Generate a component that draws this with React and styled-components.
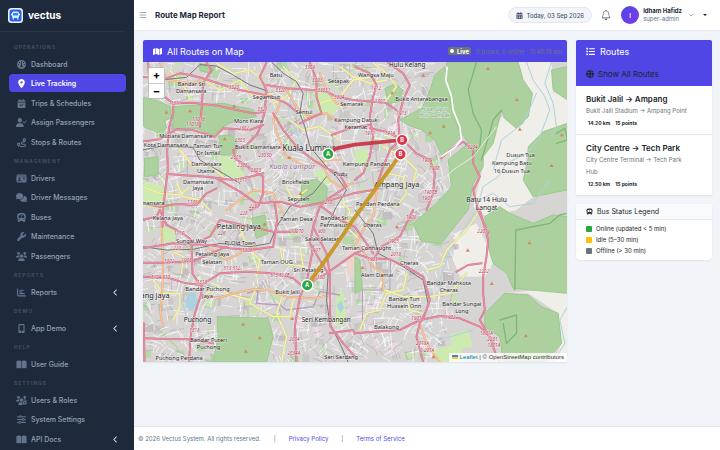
import React from "react";
import styled, { createGlobalStyle, css } from "styled-components";
import {
  FaBookOpen,
  FaBus,
  FaCalendarCheck,
  FaCalendarDays,
  FaChartBar,
  FaChevronLeft,
  FaCircle,
  FaComments,
  FaGauge,
  FaGlobe,
  FaIdCard,
  FaList,
  FaLocationDot,
  FaMap,
  FaMobileScreenButton,
  FaRoute,
  FaSliders,
  FaUserCheck,
  FaUsers,
  FaUsersGear,
  FaWrench,
} from "react-icons/fa6";
import { BsBell, BsChevronDown, BsList } from "react-icons/bs";

const GlobalStyle = createGlobalStyle`
  *, *::before, *::after {
    box-sizing: border-box;
  }
  body {
    margin: 0;
    background: #f1f4f9;
    color: #212529;
    font-family: Inter, "Liberation Sans", sans-serif;
    font-size: 7px;
    line-height: 11px;
  }
  button {
    font: inherit;
    color: inherit;
    border: 0;
    padding: 0;
    background: none;
    cursor: pointer;
  }
  a {
    color: inherit;
    text-decoration: none;
  }
  ul, h1, h2, h3, p {
    margin: 0;
    padding: 0;
    font: inherit;
    list-style: none;
  }
`;

const Shell = styled.div`
  display: grid;
  grid-template-columns: 134px 1fr;
  height: 100vh;
`;

// ---------- sidebar ----------
const Sidebar = styled.aside`
  background: #1e293b;
  overflow: hidden;
`;

const Brand = styled.a`
  display: flex;
  align-items: center;
  gap: 5px;
  height: 32px;
  margin-right: 9px;
  padding-left: 8px;
  border-bottom: 1px solid #2a3547;
  color: #fff;
  font-size: 10px;
  font-weight: 700;

  svg {
    width: 15px;
    height: 15px;
  }
`;

const Nav = styled.nav`
  padding: 8px 8px 0 9px;
`;

const NavHeading = styled.h2`
  height: 15px;
  padding: 2px 0 0 5px;
  color: #475569;
  font-size: 5px;
  font-weight: 600;
  letter-spacing: 1px;
  text-transform: uppercase;
`;

const NavList = styled.ul`
  padding-bottom: 2px;
`;

const NavItem = styled.li`
  margin-bottom: 1px;

  &:nth-child(even) {
    margin-bottom: 2px;
  }
`;

const NavLink = styled.a`
  display: flex;
  align-items: center;
  gap: 4px;
  height: 18px;
  padding: 0 7px;
  border-radius: 4px;
  color: #94a3b8;
  font-weight: 500;

  > svg {
    width: 11px;
    height: 9px;
    color: #64748b;
  }
  > span {
    flex: 1;
  }
  > svg:last-child:not(:first-child) {
    width: 7px;
    height: 7px;
    color: #e2e8f0;
  }

  ${(props) =>
    props.$active &&
    css`
      background: #4f46e5;
      color: #fff;
      font-weight: 600;

      > svg {
        color: #fff;
      }
    `}
`;

// ---------- top bar ----------
const Main = styled.div`
  display: flex;
  flex-direction: column;
  min-width: 0;
`;

const TopBar = styled.header`
  display: flex;
  align-items: center;
  height: 31px;
  padding: 0 13px 0 4px;
  background: #fff;
  border-bottom: 1px solid #e2e8f0;
`;

const IconButton = styled.button`
  display: flex;
  color: #475569;

  svg {
    width: 10px;
    height: 10px;
  }
`;

const PageTitle = styled.h1`
  flex: 1;
  margin-left: 7px;
  color: #1e293b;
  font-size: 8px;
  font-weight: 700;
`;

const DatePill = styled.div`
  display: flex;
  align-items: center;
  gap: 4px;
  height: 16px;
  margin-right: 9px;
  padding: 0 7px;
  border: 1px solid #e2e8f0;
  border-radius: 8px;
  background: #f1f5f9;
  color: #475569;
  font-size: 6px;
  font-weight: 500;

  svg {
    width: 7px;
    height: 7px;
  }
`;

const UserMenu = styled.button`
  display: flex;
  align-items: center;
  gap: 4px;
  margin-left: 10px;
  color: #64748b;
  text-align: left;

  svg {
    width: 6px;
    height: 6px;
    margin: 0 5px 0 2px;
  }
`;

const Avatar = styled.span`
  display: grid;
  place-items: center;
  width: 18px;
  height: 18px;
  border-radius: 50%;
  background: linear-gradient(135deg, #4f46e5, #7c3aed);
  color: #fff;
  font-size: 6px;
  font-weight: 600;
`;

const UserName = styled.span`
  display: flex;
  flex-direction: column;
  font-size: 6px;
  line-height: 8px;

  strong {
    color: #1e293b;
    font-weight: 700;
  }
`;

const Caret = styled.i`
  border: 2px solid transparent;
  border-top-color: #212529;
  border-bottom: 0;
`;

// ---------- content ----------
const Content = styled.main`
  display: grid;
  grid-template-columns: 1fr 136px;
  align-items: start;
  gap: 9px;
  flex: 1;
  padding: 9px 8px 0 9px;
`;

const Card = styled.section`
  overflow: hidden;
  border-radius: ${(props) => (props.$round ? "0 0 4px 4px" : "2px 2px 0 0")};
  background: #fff;
  box-shadow: 0 1px 2px rgba(15, 23, 42, 0.08);
`;

const CardHeader = styled.header`
  display: flex;
  align-items: center;
  gap: 5px;
  height: 22px;
  padding: 0 5px 0 10px;
  background: #4f46e5;
  color: #fff;
  font-size: 9px;

  svg {
    width: 9px;
    height: 9px;
  }
  h2 {
    flex: 1;
  }
`;

const LiveBadge = styled.span`
  display: flex;
  align-items: center;
  gap: 3px;
  height: 8px;
  padding: 0 2px;
  border-radius: 2px;
  background: #6c757d;
  font-size: 6px;
  font-weight: 700;

  svg {
    width: 4px;
    height: 4px;
  }
`;

const LiveStatus = styled.span`
  color: #6c757d;
  font-size: 6px;
`;

const MapBox = styled.div`
  position: relative;
  height: 300px;
  overflow: hidden;
  background: #e0dfdf;

  > svg {
    display: block;
    width: 100%;
    height: 100%;
  }
`;

const ZoomControl = styled.div`
  position: absolute;
  top: 5px;
  left: 5px;
  display: grid;
  border: 1px solid rgba(0, 0, 0, 0.25);
  border-radius: 2px;
  background: #fff;

  button {
    width: 15px;
    height: 15px;
    color: #000;
    font-size: 11px;
    font-weight: 700;
  }
  button + button {
    border-top: 1px solid #ccc;
  }
`;

const Attribution = styled.div`
  position: absolute;
  right: 0;
  bottom: 0;
  height: 9px;
  padding: 0 3px;
  background: rgba(255, 255, 255, 0.8);
  color: #333;
  font-family: "Liberation Sans", Arial, sans-serif;
  font-size: 6px;
  line-height: 9px;

  a {
    color: #0078a8;
  }
  a + a {
    color: #333;
  }
  svg {
    width: 6px;
    height: 4px;
    margin-right: 2px;
  }
`;

const SideColumn = styled.div`
  display: grid;
  gap: 9px;
`;

const ShowAll = styled.button`
  display: flex;
  align-items: center;
  gap: 4px;
  width: 100%;
  height: 24px;
  padding: 0 10px;
  background: #4f46e5;
  color: #212529;
  font-size: 8px;

  svg {
    width: 8px;
    height: 8px;
  }
`;

const RouteItem = styled.a`
  display: block;
  padding: 7px 10px 5px;
  color: #6c757d;
  font-size: 6px;
  line-height: 12px;

  & + & {
    border-top: 1px solid #e5e8ec;
  }
  h3 {
    color: #212529;
    font-size: 8px;
    font-weight: 600;
    line-height: 12px;
  }
`;

const RouteStops = styled.p`
  padding-right: 12px;
`;

const RouteFacts = styled.p`
  display: flex;
  gap: 5px;
  padding-left: 2px;
  color: #212529;
  font-size: 5px;
  font-weight: 700;
`;

const LegendTitle = styled.h2`
  display: flex;
  align-items: center;
  gap: 4px;
  height: 16px;
  padding: 0 10px;
  border-bottom: 1px solid #e5e8ec;
  background: #f8fafc;

  svg {
    width: 7px;
    height: 7px;
  }
`;

const LegendList = styled.ul`
  padding: 3px 10px 4px;
  font-size: 6px;

  li {
    display: flex;
    align-items: center;
    gap: 4px;
  }
`;

const Swatch = styled.i`
  width: 6px;
  height: 6px;
  border-radius: 1px;
  background: ${(props) => props.$color};
`;

const Footer = styled.footer`
  display: flex;
  align-items: center;
  gap: 13px;
  height: 24px;
  padding: 0 4px;
  border-top: 1px solid #e2e8f0;
  background: #fff;
  color: #64748b;
  font-size: 6px;

  a {
    color: #4f46e5;
  }
`;

// ---------- data ----------
const menu = [
  {
    title: "Operations",
    items: [
      ["Dashboard", FaGauge],
      ["Live Tracking", FaLocationDot, "active"],
      ["Trips & Schedules", FaCalendarCheck],
      ["Assign Passengers", FaUserCheck],
      ["Stops & Routes", FaRoute],
    ],
  },
  {
    title: "Management",
    items: [
      ["Drivers", FaIdCard],
      ["Driver Messages", FaComments],
      ["Buses", FaBus],
      ["Maintenance", FaWrench],
      ["Passengers", FaUsers],
    ],
  },
  { title: "Reports", items: [["Reports", FaChartBar, "tree"]] },
  { title: "Demo", items: [["App Demo", FaMobileScreenButton, "tree"]] },
  { title: "Help", items: [["User Guide", FaBookOpen]] },
  {
    title: "Settings",
    items: [
      ["Users & Roles", FaUsersGear],
      ["System Settings", FaSliders],
      ["API Docs", FaBookOpen, "tree"],
    ],
  },
];

const routes = [
  {
    name: "Bukit Jalil → Ampang",
    stops: "Bukit Jalil Stadium → Ampang Point",
    km: "14.20 km",
    points: "15 points",
  },
  {
    name: "City Centre → Tech Park",
    stops: "City Centre Terminal → Tech Park Hub",
    km: "12.50 km",
    points: "15 points",
  },
];

const legend = [
  ["#28a745", "Online (updated < 5 min)"],
  ["#ffc107", "Idle (5–30 min)"],
  ["#6c757d", "Offline (> 30 min)"],
];

// ---------- map ----------
const forests = [
  "920,6 1135,6 1150,60 1178,100 1165,170 1130,205 1095,175 1085,150 1060,250 1030,290 1030,320 1000,370 985,450 960,480 905,550 845,545 820,490 890,430 935,380 925,300 985,250 955,200 935,130 918,60",
  "780,180 845,145 868,100 885,45 915,20 925,80 935,150 965,230 945,250 905,285 885,240 845,210 805,195",
  "1165,260 1210,215 1283,190 1283,390 1180,410 1150,360 1165,300",
  "1235,30 1283,20 1283,120 1240,90",
  "1035,470 1080,440 1110,460 1180,490 1240,465 1283,470 1283,700 1120,685 1100,640 1060,610 1045,560",
  "1035,760 1095,700 1165,705 1205,740 1255,760 1265,850 1215,906 1090,906 1080,830 1035,800",
  "232,770 385,775 400,830 380,906 220,906 235,830",
  "100,140 250,130 340,150 350,170 290,180 250,200 220,225 170,205 100,205",
  "237,228 270,225 292,240 288,285 240,285",
  "10,112 60,125 92,140 95,175 75,180 80,205 55,218 12,200",
  "14,295 55,290 55,345 14,350",
  "485,365 530,358 562,380 560,420 520,435 485,415",
  "735,85 765,72 790,90 780,125 745,130",
  "645,590 660,600 668,690 645,700",
  "335,475 375,465 385,520 350,535",
  "180,10 225,20 215,40 180,32",
];

const lightParks = [
  "230,292 270,288 315,345 300,362 250,345",
  "10,360 70,380 75,450 10,440",
  "520,80 560,90 600,140 570,170 530,150",
  "645,270 680,265 690,300 645,320",
  "590,700 610,690 620,790 585,800",
  "930,825 985,810 1000,860 940,870",
  "520,340 540,325 580,360 560,375",
  "60,500 110,505 105,545 65,545",
  "880,870 960,850 980,906 890,906",
];

const scrub = [
  "1135,6 1235,6 1240,95 1283,120 1283,190 1210,215 1165,260 1150,360 1180,410 1130,450 1040,470 1000,440 1030,320 1030,290 1085,170 1130,205 1165,170 1178,100 1150,60",
  "945,520 1010,490 1045,560 1060,610 1035,650 960,650 940,600",
  "1090,700 1200,690 1283,700 1283,906 1240,906 1265,850 1255,760 1165,700",
];

const trunkRoads = [
  "8,50 70,58 120,40 150,45 200,58 250,75 300,90 350,100 395,110 440,130 470,155",
  "200,8 215,30 190,70 186,140 180,200",
  "25,8 28,60 60,100 100,130 100,160 88,200 82,270 84,330 75,400 70,450 68,500",
  "8,245 60,238 80,225 110,208 160,210 190,220 225,230 250,205 330,210 370,195",
  "95,130 160,128 240,138 290,150 340,160 375,155",
  "380,8 360,50 380,90 375,150 365,195 350,225 320,255 280,270 285,295 330,325 370,350 370,400 355,440 330,450",
  "370,340 330,350 280,360 200,350 120,345 85,342",
  "380,75 440,85 520,90 560,95 590,110 640,120 700,125 740,130 770,150",
  "510,8 530,60 530,110 545,160 500,180 480,190",
  "645,20 690,40 710,75 700,110 690,170 700,230 690,290 670,340 645,360",
  "745,8 790,40 810,75 790,120 775,180 780,240 750,270 730,320 710,380",
  "690,205 740,215 790,240 830,280 870,300 885,340 880,400 860,450",
  "400,160 430,210 470,260 520,300 570,330 620,350",
  "600,345 620,380 590,400 560,420 540,440 520,500 510,550 540,600 565,640",
  "8,430 60,440 110,432 170,435 200,400 230,385",
  "230,355 300,395 350,430 420,425 480,440 540,430 640,400 700,390",
  "405,430 412,480 400,560 330,570 270,565 210,555 100,550 8,565",
  "470,515 400,515 330,500 240,480 210,530 155,555 158,640 180,675",
  "60,450 80,495 130,520 155,540",
  "8,608 80,608 160,603 260,560",
  "8,650 90,655 140,670 185,675 240,640 320,635 400,640 460,655 490,680 560,640 645,580 700,560",
  "185,675 185,700 165,760 152,830 148,906",
  "8,835 80,837 150,838 220,850",
  "12,790 14,906",
  "470,906 465,800 480,710 500,670 520,560",
  "520,500 560,580 570,640 570,740 572,800 610,850 645,890",
  "545,440 600,480 645,500 700,580",
  "645,580 690,595 750,598 800,620 850,650 870,720 860,750 840,790 830,830 850,906",
  "700,600 725,560 780,530 820,450",
  "645,820 700,815 780,810 840,780 900,768 960,775 1020,800 1050,830 1070,890 1080,906",
  "1020,450 1045,540 1040,590 1030,650 1030,700 1035,750 1020,780 1060,850",
  "905,295 930,270 970,245 1000,270 1000,310 1020,350 1000,390 1015,450 1045,520",
  "950,635 985,615 1025,610",
  "8,480 50,470 60,450",
  "575,225 630,205 690,195",
  "570,820 640,810 645,820",
];

const orangeRoads = [
  "60,6 80,60 160,70 190,55",
  "65,480 68,560 70,650 62,760 70,800",
  "420,130 400,180 415,230 440,290 500,320 560,300 600,300",
  "440,90 470,140 500,170 560,160 600,190",
  "200,560 260,600 320,570 350,560",
  "645,560 680,490 700,470 710,400 720,350 740,300",
  "660,560 700,620 730,640 730,690",
  "185,710 240,712 300,695 345,688 380,690 440,710 520,715 570,705",
  "840,790 860,850 880,880 900,906",
  "550,320 570,360 600,380 640,370",
  "540,40 560,90 590,130 620,140",
  "260,450 300,420 340,390 400,400 430,460",
];

const yellowRoads = [
  "190,60 240,90 300,60 340,110 400,100",
  "90,30 140,90 150,120",
  "230,10 280,40 330,30 370,60",
  "120,270 160,320 200,310 250,350",
  "8,380 60,400 120,405 150,380",
  "110,370 130,410 180,420 210,450",
  "430,20 470,60 440,110 400,130",
  "450,180 490,210 540,200 600,240",
  "540,130 600,110 640,60 700,50",
  "600,20 640,50 690,70 740,60",
  "700,8 740,40 770,80 740,120",
  "40,660 70,700 120,700 120,740 100,780",
  "300,500 320,560 360,600 350,650",
  "350,680 330,730 400,770 450,770 460,720",
  "420,560 430,610 490,620 480,560",
  "660,810 680,760 720,750 740,700 790,690 800,640",
  "735,690 790,710 870,710 930,700 980,640",
  "860,630 900,620 920,570 980,510 1020,450",
  "800,710 810,750 850,760",
  "430,700 410,760 440,830 425,906",
  "200,700 240,680 260,700 330,720",
  "730,260 790,290 830,330 820,370",
  "740,340 790,350 800,400 770,440 740,430",
  "500,390 460,420 440,380",
  "600,420 630,450 620,500 660,540",
  "90,570 130,590 125,640",
];

const railways = [
  "395,6 430,40 470,65 490,100 480,160 495,200 510,260 560,320 590,350 620,390 590,440 560,500",
  "60,60 140,52 180,14 230,18 280,45 330,75 380,92",
  "8,560 80,570 160,568 240,550 330,560 390,550 410,500 450,440 520,400 560,350",
  "565,640 560,720 570,790 600,850 625,906",
  "645,450 700,520 715,580 790,620 850,660 865,730 850,780",
  "8,270 60,260 160,262 180,300 250,340 300,370",
];

const rivers = [
  "1160,6 1180,60 1215,110 1230,150 1200,230 1160,280 1100,310 1075,350 1030,380 1010,450 930,570 900,660",
  "1235,6 1215,70 1240,130 1250,200 1235,230",
  "1283,740 1260,780 1275,850 1240,906",
  "1230,360 1180,430 1110,440 1060,400 1020,420",
  "880,760 850,800 900,840 1000,810",
  "1190,100 1150,190 1085,240 1060,330",
  "440,6 460,80 445,160 480,240 520,330",
  "120,700 140,770 180,790 220,740",
];

const boundaries = [
  "1010,6 985,90 1000,160 1025,210 1020,260 1002,285",
  "1125,690 1128,510 1230,490 1260,465 1283,460",
  "1085,150 1060,180 1040,250 1025,300",
  "1080,780 1130,765 1130,820 1100,850 1090,790",
  "1250,220 1275,205 1283,240 1250,250",
];

const places = [
  ["Batu", 408, 52],
  ["Setapak", 596, 70],
  ["Bandar Sri", 155, 77],
  ["Damansara", 154, 98],
  ["Segambut", 380, 117],
  ["Sentul", 493, 162],
  ["Mont Kiara", 326, 190],
  ["Semarak", 636, 139],
  ["Kampung Datuk", 648, 185],
  ["Keramat", 648, 206],
  ["Mutiara Damansara", 137, 233],
  ["Kota Damansara", 78, 262],
  ["Taman Tun", 205, 264],
  ["Dr Ismail", 206, 284],
  ["Bukit Damansara", 354, 268],
  ["Damansara", 200, 319],
  ["Utama", 198, 340],
  ["Damansara", 175, 371],
  ["Jaya", 174, 391],
  ["Brickfields", 468, 371],
  ["Pudu", 602, 349],
  ["Kampung Pandan", 680, 319],
  ["Seputeh", 476, 424],
  ["Damansara", 28, 435],
  ["Hulu Kelang", 802, 21, 19],
  ["Wangsa Maju", 708, 51],
  ["Bukit Antarabangsa", 845, 124],
  ["Dusun Tua", 1142, 291],
  ["Kampung Batu", 1116, 315],
  ["16 Dusun Tua", 1116, 339],
  ["Pandan Perdana", 714, 437],
  ["Batu 14 Hulu", 1040, 426, 20],
  ["Langat", 1040, 450, 20],
  ["Ampang Jaya", 771, 381, 22],
  ["Kuala Lumpur", 507, 273, 24],
  ["Petaling Jaya", 297, 506, 22],
  ["Subang Jaya", 26, 713, 22],
  ["Kelana Jaya", 84, 481],
  ["Sungai Way", 155, 549],
  ["PJ Old Town", 301, 555],
  ["Petaling Jaya", 217, 589],
  ["Selatan", 217, 611],
  ["Taman Desa", 470, 482],
  ["Bandar Sri", 584, 480],
  ["Permaisuri", 584, 501],
  ["Salak Selatan", 548, 543],
  ["Taman OUG", 411, 612],
  ["Sri Petaling", 506, 637],
  ["Taman Connaught", 680, 570],
  ["Bukit Jalil", 443, 702],
  ["Bandar Puchong", 203, 693],
  ["Jaya", 203, 714],
  ["Puchong", 173, 786, 20],
  ["Seri Kembangan", 559, 786, 19],
  ["Bandar Puteri", 206, 847],
  ["Puchong", 206, 868],
  ["Puchong Perdana", 118, 901],
  ["Seri Serdang", 604, 898],
  ["Cheras", 698, 500],
  ["Cheras", 808, 615],
  ["Alam Damai", 712, 651],
  ["Bandar Mahkota", 927, 675],
  ["Cheras", 927, 696],
  ["Bandar Tun", 793, 724],
  ["Hussein Onn", 793, 744],
  ["Bandar Sungai", 966, 738],
  ["Long", 966, 759],
  ["Balakong", 740, 807],
];

const roadNumbers = [
  ["3320", 282, 86],
  ["3320", 422, 95],
  ["3309", 510, 27],
  ["3303", 532, 66],
  ["33031", 552, 97],
  ["3304", 598, 118],
  ["1311", 108, 136],
  ["11016", 176, 182],
  ["11018", 158, 199],
  ["3321", 368, 153],
  ["2302", 312, 211],
  ["2303", 300, 246],
  ["2303D", 376, 290],
  ["2305", 288, 297],
  ["2306", 308, 320],
  ["2303", 348, 336],
  ["1311", 306, 367],
  ["1108", 158, 432],
  ["226", 340, 444],
  ["210", 566, 432],
  ["1912", 708, 90],
  ["1301", 720, 130],
  ["1913", 785, 165],
  ["1911", 690, 225],
  ["1914", 750, 224],
  ["1909", 862, 305],
  ["1908", 884, 330],
  ["1907B", 872, 402],
  ["1907", 862, 419],
  ["3204", 998, 268],
  ["228", 312, 465],
  ["226", 246, 526],
  ["1110", 118, 526],
  ["220", 112, 569],
  ["1006", 322, 576],
  ["1002", 88, 608],
  ["1003", 140, 605],
  ["510A 510", 62, 656],
  ["513 512", 276, 630],
  ["513 513B", 420, 650],
  ["1318", 186, 671],
  ["1318", 164, 816],
  ["10070", 472, 518],
  ["907", 530, 575],
  ["908", 546, 519],
  ["513D", 540, 658],
  ["2034", 464, 844],
  ["2034A", 462, 885],
  ["1908", 814, 478],
  ["1905", 762, 548],
  ["1903", 698, 602],
  ["2018", 768, 589],
  ["1901", 830, 780],
  ["1902", 932, 778],
  ["2201", 1028, 520],
  ["2202", 1032, 640],
  ["1801A", 1040, 826],
  ["2201", 1058, 844],
  ["1801A", 1062, 862],
  ["2018A", 848, 856],
  ["8 201A", 862, 875],
];

const peaks = [
  [151, 152], [80, 156], [283, 138], [255, 236], [448, 292], [482, 400],
  [757, 98], [850, 45], [1044, 25], [1131, 118], [912, 198], [871, 218],
  [1140, 207], [1266, 224], [1235, 316], [984, 570], [1169, 548], [1056, 670],
  [1158, 827], [310, 792], [360, 833], [318, 873], [374, 492], [881, 890],
  [668, 622], [771, 500], [457, 775],
];

// Small deterministic generator, the side streets come out the same on every render
function makeRandom(seed) {
  let s = seed;
  return () => {
    s = (s * 16807) % 2147483647;
    return s / 2147483647;
  };
}

function buildStreets() {
  const rnd = makeRandom(41);
  let white = "";
  let grey = "";
  const blocks = [];
  for (let i = 0; i < 1900; i++) {
    const x = Math.round(rnd() * 940);
    const y = Math.round(rnd() * 900);
    const angle = Math.sin(x / 130) + Math.cos(y / 110) + (i % 2 ? 1.57 : 0);
    const len = 12 + rnd() * 38;
    const dx = Math.round(Math.cos(angle) * len);
    const dy = Math.round(Math.sin(angle) * len);
    const piece = `M${x} ${y}q${dx} ${dy >> 1} ${dx} ${dy}`;
    if (i % 3 === 0) grey += piece;
    else white += piece;
    if (i % 6 === 0) {
      blocks.push([x, y, 8 + rnd() * 24, 8 + rnd() * 20, i % 5]);
    }
  }
  return { white, grey, blocks };
}

const streets = buildStreets();
const blockColors = ["#c4c0c1", "#c8e2b3", "#e6d6e2", "#cbc7c7", "#b4d8a6"];

const Label = styled.text`
  fill: ${(props) => props.$fill || "#222"};
  font-family: "Noto Sans", sans-serif;
  font-size: ${(props) => props.$size || 17}px;
  font-style: ${(props) => (props.$italic ? "italic" : "normal")};
  text-anchor: middle;
  paint-order: stroke;
  stroke: rgba(255, 255, 255, 0.6);
  stroke-width: 3px;
`;

const MarkerText = styled.text`
  fill: #fff;
  font-family: Inter, sans-serif;
  font-size: 17px;
  font-weight: 700;
  text-anchor: middle;
`;

function Lines({ items, ...rest }) {
  return (
    <g fill="none" strokeLinejoin="round" strokeLinecap="round" {...rest}>
      {items.map((points) => (
        <polyline key={points} points={points} />
      ))}
    </g>
  );
}

function Areas({ items, ...rest }) {
  return (
    <g strokeLinejoin="round" {...rest}>
      {items.map((points) => (
        <polygon key={points} points={points} />
      ))}
    </g>
  );
}

function Marker({ x, y, letter, color }) {
  return (
    <g>
      <circle cx={x} cy={y} r="17" fill={color} stroke="#fff" strokeWidth="4" />
      <MarkerText x={x} y={y + 6}>
        {letter}
      </MarkerText>
    </g>
  );
}

function CityMap() {
  return (
    <svg viewBox="8 6 1275 900" preserveAspectRatio="xMidYMid slice" role="img">
      <title>Bus routes in Kuala Lumpur</title>
      <rect x="8" y="6" width="1275" height="900" fill="#d7d4d4" />
      <Areas items={scrub} fill="#f0eee8" />
      {streets.blocks.map(([x, y, w, h, c], i) => (
        <rect key={i} x={x} y={y} width={w} height={h} fill={blockColors[c]} />
      ))}
      <path d={streets.grey} fill="none" stroke="#b5b1b2" strokeWidth="2" />
      <path d={streets.white} fill="none" stroke="#fff" strokeWidth="2" />
      <Areas items={lightParks} fill="#cdebb0" />
      <Areas items={forests} fill="#add19e" stroke="#9bc98d" strokeWidth="3" />
      <Lines items={boundaries} stroke="#7db874" strokeWidth="4" />
      <Lines items={rivers} stroke="#aad3df" strokeWidth="3" />
      <path
        d="M140 705l22-8 14 28-18 30-20-14zM590 735l14-14 8 22-10 16zM240 515l12-4 6 12-14 4z"
        fill="#aad3df"
      />
      <polygon points="1270,600 1283,590 1283,680 1272,670" fill="#add19e" />
      <polygon points="620,560 645,575 640,660 622,640" fill="#ecd5cf" />
      <polyline
        points="322,700 355,690 350,730 420,735 440,750 520,740 540,695 600,705"
        fill="none"
        stroke="#b59cc4"
        strokeWidth="4"
      />
      <polyline
        points="668,800 668,690 750,690 752,600"
        fill="none"
        stroke="#b0a3b5"
        strokeWidth="3"
      />
      <Lines items={yellowRoads} stroke="#d3cf8d" strokeWidth="6" />
      <Lines items={yellowRoads} stroke="#f5f6a8" strokeWidth="4" />
      <Lines items={orangeRoads} stroke="#dfa276" strokeWidth="6" />
      <Lines items={orangeRoads} stroke="#f9c79b" strokeWidth="4" />
      <Lines items={railways} stroke="#77757a" strokeWidth="3" />
      <Lines items={trunkRoads} stroke="#d0708a" strokeWidth="6" />
      <Lines items={trunkRoads} stroke="#e68ea1" strokeWidth="4" />
      <polyline
        points="922,20 918,60 935,110 940,150 960,200 965,240 945,262 905,290"
        fill="none"
        stroke="#fff"
        strokeWidth="5"
      />
      <polyline
        points="900,370 940,330 1000,290 1070,200"
        fill="none"
        stroke="#e8f1dc"
        strokeWidth="3"
      />
      {peaks.map(([x, y]) => (
        <path key={`${x}-${y}`} d={`M${x} ${y - 5}l6 10h-12z`} fill="#d08a5a" />
      ))}
      {roadNumbers.map(([text, x, y]) => (
        <Label key={text + x + y} x={x} y={y} $size={14} $fill="#b8304e" $italic>
          {text}
        </Label>
      ))}
      {places.map(([text, x, y, size]) => (
        <Label key={text + x + y} x={x} y={y} $size={size}>
          {text}
        </Label>
      ))}
      <Label x="457" y="327" $size={22} $fill="#8d6b9a" $italic>
        Kuala Lumpur
      </Label>
      <Label x="884" y="152" $size={14} $fill="#7b9c8a">
        Hutan Lipur
      </Label>
      <Label x="884" y="170" $size={14} $fill="#7b9c8a">
        Hulu Gombak
      </Label>
      <Label x="90" y="751" $size={14} $fill="#888">
        USJ
      </Label>
      <polyline
        points="565,282 590,265 645,254 787,240"
        fill="none"
        stroke="#c82338"
        strokeWidth="11"
        strokeLinejoin="round"
        opacity="0.85"
      />
      <polyline
        points="782,283 645,472 575,575 502,676"
        fill="none"
        stroke="#c6931d"
        strokeWidth="12"
        strokeLinejoin="round"
        opacity="0.9"
      />
      <Marker x={565} y={282} letter="A" color="#28a745" />
      <Marker x={502} y={676} letter="A" color="#28a745" />
      <Marker x={787} y={240} letter="B" color="#dc3545" />
      <Marker x={782} y={283} letter="B" color="#dc3545" />
    </svg>
  );
}

function Logo() {
  return (
    <svg viewBox="0 0 30 30" aria-hidden="true">
      <rect width="30" height="30" rx="7" fill="#eff6ff" />
      <rect x="3" y="3" width="24" height="24" rx="5" fill="#2563eb" />
      <rect x="8" y="7" width="14" height="13" rx="3" fill="#dbeafe" />
      <rect x="6" y="11" width="18" height="4" rx="1" fill="#dbeafe" />
      <rect x="10" y="10" width="10" height="5" rx="1" fill="#3b82f6" />
      <rect x="9" y="20" width="3" height="3" rx="1" fill="#dbeafe" />
      <rect x="18" y="20" width="3" height="3" rx="1" fill="#dbeafe" />
    </svg>
  );
}

export default function App() {
  return (
    <>
      <GlobalStyle />
      <Shell>
        <Sidebar>
          <Brand href="#">
            <Logo />
            vectus
          </Brand>
          <Nav>
            {menu.map((group) => (
              <React.Fragment key={group.title}>
                <NavHeading>{group.title}</NavHeading>
                <NavList>
                  {group.items.map(([label, Icon, kind]) => (
                    <NavItem key={label}>
                      <NavLink href="#" $active={kind === "active"}>
                        <Icon />
                        <span>{label}</span>
                        {kind === "tree" && <FaChevronLeft />}
                      </NavLink>
                    </NavItem>
                  ))}
                </NavList>
              </React.Fragment>
            ))}
          </Nav>
        </Sidebar>

        <Main>
          <TopBar>
            <IconButton aria-label="Toggle menu">
              <BsList />
            </IconButton>
            <PageTitle>Route Map Report</PageTitle>
            <DatePill>
              <FaCalendarDays />
              Today, 03 Sep 2026
            </DatePill>
            <IconButton aria-label="Notifications">
              <BsBell />
            </IconButton>
            <UserMenu>
              <Avatar>I</Avatar>
              <UserName>
                <strong>Idham Hafidz</strong>
                super-admin
              </UserName>
              <BsChevronDown />
              <Caret />
            </UserMenu>
          </TopBar>

          <Content>
            <Card>
              <CardHeader>
                <FaMap />
                <h2>All Routes on Map</h2>
                <LiveBadge>
                  <FaCircle />
                  Live
                </LiveBadge>
                <LiveStatus>0 buses, 0 online · 11:48:18 am</LiveStatus>
              </CardHeader>
              <MapBox>
                <CityMap />
                <ZoomControl>
                  <button aria-label="Zoom in">+</button>
                  <button aria-label="Zoom out">−</button>
                </ZoomControl>
                <Attribution>
                  <a href="#">
                    <svg viewBox="0 0 12 8" aria-hidden="true">
                      <path fill="#4c7be1" d="M0 0h12v4H0z" />
                      <path fill="#ffd500" d="M0 4h12v3H0z" />
                      <path fill="#e0bc00" d="M0 7h12v1H0z" />
                    </svg>
                    Leaflet
                  </a>{" "}
                  | © <a href="#">OpenStreetMap</a> contributors
                </Attribution>
              </MapBox>
            </Card>

            <SideColumn>
              <Card>
                <CardHeader>
                  <FaList />
                  <h2>Routes</h2>
                </CardHeader>
                <ShowAll>
                  <FaGlobe />
                  Show All Routes
                </ShowAll>
                {routes.map((route) => (
                  <RouteItem href="#" key={route.name}>
                    <h3>{route.name}</h3>
                    <RouteStops>{route.stops}</RouteStops>
                    <RouteFacts>
                      <span>{route.km}</span>
                      <span>{route.points}</span>
                    </RouteFacts>
                  </RouteItem>
                ))}
              </Card>
              <Card $round>
                <LegendTitle>
                  <FaBus />
                  Bus Status Legend
                </LegendTitle>
                <LegendList>
                  {legend.map(([color, text]) => (
                    <li key={text}>
                      <Swatch $color={color} />
                      {text}
                    </li>
                  ))}
                </LegendList>
              </Card>
            </SideColumn>
          </Content>

          <Footer>
            <span>© 2026 Vectus System. All rights reserved.</span>
            <span>|</span>
            <a href="#">Privacy Policy</a>
            <span>|</span>
            <a href="#">Terms of Service</a>
          </Footer>
        </Main>
      </Shell>
    </>
  );
}
